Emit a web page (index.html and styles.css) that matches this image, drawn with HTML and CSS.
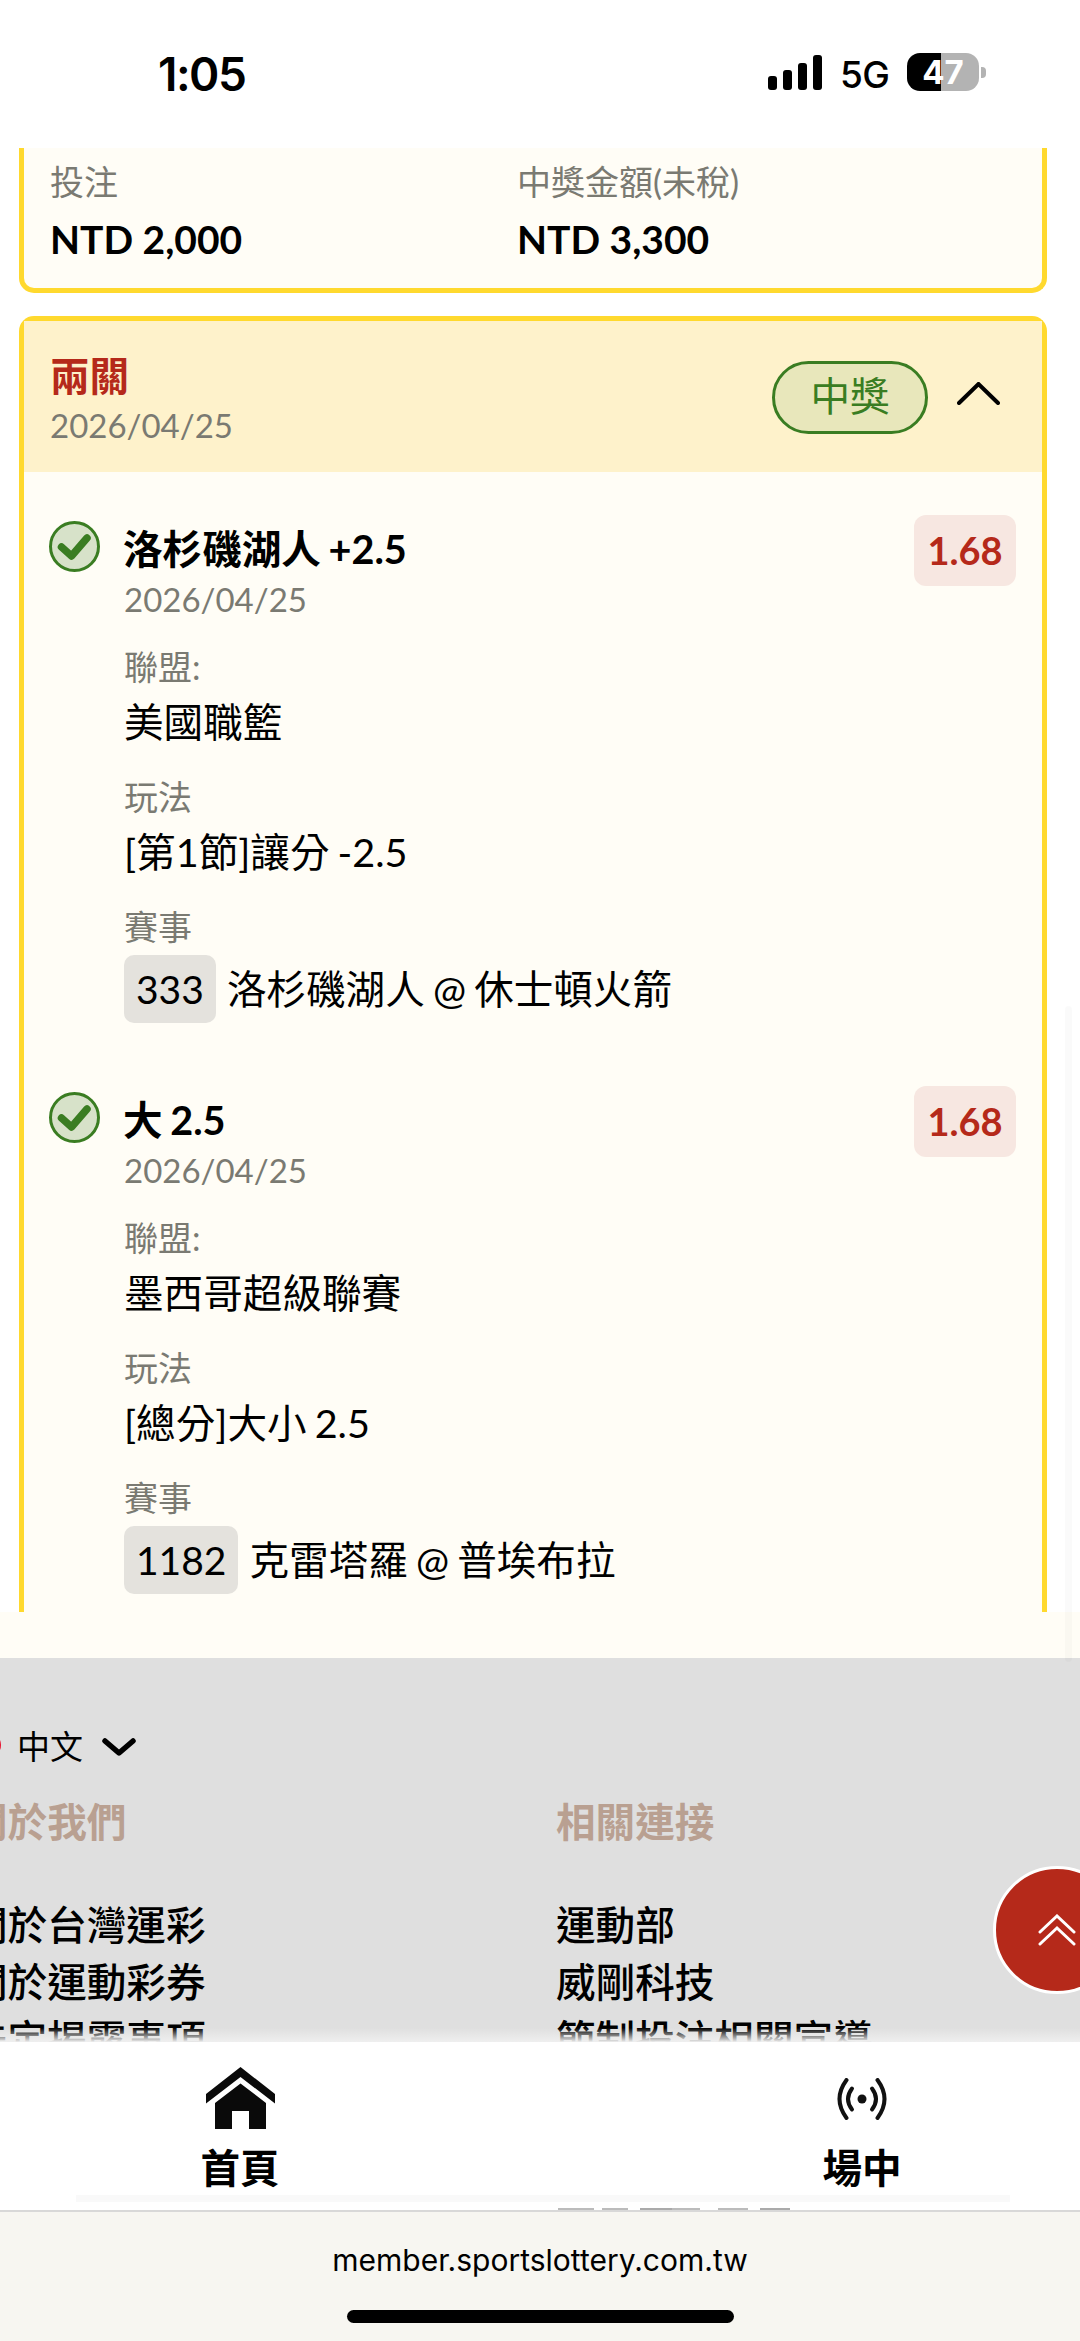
FILE: index.html
```html
<!DOCTYPE html>
<html lang="zh-Hant">
<head>
<meta charset="utf-8">
<title>兩關</title>
<link rel="stylesheet" href="styles.css">
</head>
<body>
<div class="phone">
  <header class="status">
    <span class="clock">1:05</span>
    <div class="status-right">
      <div class="signal"><i class="b1"></i><i class="b2"></i><i class="b3"></i><i class="b4"></i></div>
      <span class="net">5G</span>
      <div class="battery"><div class="cell"><span>47</span></div><i class="nub"></i></div>
    </div>
  </header>

  <main class="scroll">
    <section class="card card-end">
      <div class="summary">
        <div>
          <div class="label">投注</div>
          <div class="amount">NTD 2,000</div>
        </div>
        <div>
          <div class="label">中獎金額(未稅)</div>
          <div class="amount">NTD 3,300</div>
        </div>
      </div>
    </section>

    <section class="card card-start">
      <div class="card-head">
        <div>
          <div class="bet-type">兩關</div>
          <div class="date">2026/04/25</div>
        </div>
        <div class="head-right">
          <span class="badge">中獎</span>
          <svg class="chev-up" viewBox="0 0 43 23" width="43" height="23"><path d="M2 21 21.5 2 41 21" fill="none" stroke="#000" stroke-width="4" stroke-linecap="round" stroke-linejoin="miter"/></svg>
        </div>
      </div>
      <div class="card-body">
        <article class="item">
          <svg class="check" viewBox="0 0 51 51" width="51" height="51"><circle cx="25.5" cy="25.5" r="24" fill="#d7e2c9" stroke="#3a7d22" stroke-width="3"/><path d="M12.500 26 22.500 35 38 17" fill="none" stroke="#3a7d22" stroke-width="7.500" stroke-linecap="round" stroke-linejoin="round"/></svg>
          <div class="item-main">
            <div class="item-title">洛杉磯湖人 +2.5</div>
            <div class="date">2026/04/25</div>
            <div class="label field">聯盟:</div>
            <div class="value">美國職籃</div>
            <div class="label field">玩法</div>
            <div class="value">[第1節]讓分 -2.5</div>
            <div class="label field">賽事</div>
            <div class="match"><span class="chip">333</span><span class="value">洛杉磯湖人 @ 休士頓火箭</span></div>
          </div>
          <span class="odds">1.68</span>
        </article>
        <article class="item">
          <svg class="check" viewBox="0 0 51 51" width="51" height="51"><circle cx="25.5" cy="25.5" r="24" fill="#d7e2c9" stroke="#3a7d22" stroke-width="3"/><path d="M12.500 26 22.500 35 38 17" fill="none" stroke="#3a7d22" stroke-width="7.500" stroke-linecap="round" stroke-linejoin="round"/></svg>
          <div class="item-main">
            <div class="item-title">大 2.5</div>
            <div class="date">2026/04/25</div>
            <div class="label field">聯盟:</div>
            <div class="value">墨西哥超級聯賽</div>
            <div class="label field">玩法</div>
            <div class="value">[總分]大小 2.5</div>
            <div class="label field">賽事</div>
            <div class="match"><span class="chip">1182</span><span class="value">克雷塔羅 @ 普埃布拉</span></div>
          </div>
          <span class="odds">1.68</span>
        </article>
      </div>
    </section>
  </main>

  <div class="cream-gap"></div>

  <footer class="footer">
    <div class="lang">
      <i class="flag"></i><span>中文</span>
      <svg viewBox="0 0 34 18" width="34" height="18"><path d="M3 3 17 15 31 3" fill="none" stroke="#000" stroke-width="5.5" stroke-linecap="round" stroke-linejoin="round"/></svg>
    </div>
    <div class="foot-cols">
      <div class="foot-col">
        <h3>關於我們</h3>
        <a>關於台灣運彩</a>
        <a>關於運動彩券</a>
        <a>法定揭露事項</a>
      </div>
      <div class="foot-col">
        <h3>相關連接</h3>
        <a>運動部</a>
        <a>威剛科技</a>
        <a>節制投注相關宣導</a>
      </div>
    </div>
  </footer>

  <nav class="tabs">
    <div class="tab-row">
      <div class="tab tab-home">
        <svg viewBox="0 0 69 62" width="69" height="62"><path d="M34.500 0 69 27V36.500L34.500 10 0 36.500V27Z" fill="#0a0a0a"/><path d="M34.500 16.500 60 36V62H43V44H26V62H9V36Z" fill="#0a0a0a"/></svg>
        <span>首頁</span>
      </div>
      <div class="tab tab-live">
        <svg viewBox="0 0 52 42" width="52" height="42" class="live"><circle cx="26" cy="21" r="4.500" fill="#111"/><g fill="none" stroke="#111" stroke-width="4" stroke-linecap="round"><path d="M16 10.500Q8 21 16 31.500"/><path d="M36 10.500Q44 21 36 31.500"/><path d="M10.500 2Q-3.500 21 10.500 40"/><path d="M41.500 2Q55.500 21 41.500 40"/></g></svg>
        <span>場中</span>
      </div>
    </div>
    <div class="tab-band"></div>
    <div class="tab-under"></div>
  </nav>

  <div class="browser">
    <div class="url">member.sportslottery.com.tw</div>
    <div class="home-bar"></div>
  </div>

  <div class="scroll-thumb"></div>

  <button class="to-top" type="button" aria-label="top">
    <svg viewBox="0 0 38 32" width="38" height="32"><g fill="none" stroke="#fff" stroke-width="3" stroke-linecap="round"><path d="M2 18 19 2 36 18"/><path d="M2 30 19 14 36 30"/></g></svg>
  </button>
</div>
</body>
</html>
```
FILE: styles.css
```css
* { box-sizing: border-box; }
html, body { margin: 0; padding: 0; background: #fff; }
body { font-family: Lato, "Noto Sans CJK TC", sans-serif; color: #000; }
.phone { position: relative; width: 1080px; height: 2341px; overflow: hidden; display: flex; flex-direction: column; }

/* status bar */
.status { height: 148px; flex: none; background: #fff; display: flex; justify-content: space-between; align-items: flex-start; padding: 46px 94px 0 158px; }
.clock { font-family: Inter, sans-serif; font-weight: 600; font-size: 46px; line-height: 56px; letter-spacing: -1.500px; }
.status-right { display: flex; align-items: flex-start; padding-top: 7px; }
.signal { display: flex; align-items: flex-end; gap: 5.500px; height: 35px; margin-top: 2px; }
.signal i { width: 9.500px; background: #000; border-radius: 3px; }
.b1 { height: 14px; } .b2 { height: 20px; } .b3 { height: 27px; } .b4 { height: 35px; }
.net { font-family: Inter, sans-serif; font-weight: 500; font-size: 37px; line-height: 42px; margin-left: 18px; letter-spacing: -.5px; width: 49px; margin-top: 1px; }
.battery { display: flex; align-items: center; margin-left: 18px; }
.cell { width: 72px; height: 38px; border-radius: 13px; background: linear-gradient(90deg, #000 0 34px, #b3b3b3 34px); color: #fff; font-family: Inter, sans-serif; font-weight: 700; font-size: 33px; line-height: 38px; text-align: center; }
.nub { width: 5px; height: 11px; margin-left: 2px; background: #b3b3b3; border-radius: 0 4px 4px 0; }

/* cards */
.scroll { height: 1464px; flex: none; overflow: hidden; background: #fff; padding: 0 33px 0 19px; }
.card { background: #fffdf6; border: 5px solid #ffd92e; }
.card-end { border-top: 0; border-radius: 0 0 15px 15px; height: 145px; margin-bottom: 23px; }
.card-start { border-bottom: 0; border-radius: 15px 15px 0 0; height: 1296px; }
.summary { display: grid; grid-template-columns: 467px 1fr; padding: 10px 26px 0; }
.label { font-size: 34px; line-height: 48px; color: #7a7a72; }
.amount { font-size: 39px; font-weight: 700; line-height: 54px; margin-top: 6px; }

.card-head { height: 151px; background: #fef2cb; display: flex; justify-content: space-between; padding: 29px 42px 0 26px; }
.bet-type { font-size: 39.600px; font-weight: 700; color: #b5291a; line-height: 52px; }
.date { font-size: 33px; line-height: 47px; color: #7a7a72; }
.head-right { display: flex; align-items: flex-start; gap: 29px; padding-top: 11px; }
.badge { width: 156px; height: 73px; border: 3px solid #3a7d22; border-radius: 37px; background: #e8e7bb; color: #3a7d22; font-size: 39.600px; line-height: 64px; text-align: center; }
.chev-up { margin-top: 21px; }

.card-body { padding: 50px 26px 0 25px; }
.item { display: flex; align-items: flex-start; margin-bottom: 70px; }
.check { flex: none; margin: -1px 24px 0 0; }
.item-main { flex: 1; word-spacing: -2px; }
.item-title { font-size: 39.600px; font-weight: 700; line-height: 54px; margin-left: -1px; }
.field { margin-top: 20px; }
.value { font-size: 39.600px; line-height: 62px; }
.match { display: flex; align-items: center; gap: 11px; margin-top: 4px; }
.chip { background: #e4e2dd; border-radius: 10px; height: 68px; padding: 0 12px; font-size: 39px; line-height: 68px; }
.odds { flex: none; width: 102px; height: 71px; margin-top: -7px; background: #f7e7e1; border-radius: 12px; color: #b5291a; font-size: 38px; font-weight: 700; line-height: 71px; text-align: center; }

.cream-gap { height: 46px; flex: none; background: #fffdf6; }

/* footer */
.footer { position: relative; height: 384px; flex: none; overflow: hidden; background: #dfdfdf; font-family: "Noto Sans CJK TC", sans-serif; padding-top: 64px; }
.footer::after { content: ""; position: absolute; left: 0; right: 0; bottom: 0; height: 14px; background: linear-gradient(#dfdfdf00, #efefef); }
.lang { display: flex; align-items: center; height: 46px; font-size: 33px; margin-left: -23px; }
.flag { width: 24px; height: 24px; border-radius: 50%; background: #e8112d; margin-right: 16px; }
.lang svg { margin: 4px 0 0 19px; }
.foot-cols { display: grid; grid-template-columns: 588px 1fr; margin: 0 0 0 -32px; padding-top: 24px; }
.foot-col h3 { margin: 0 0 46px; font-size: 39.600px; font-weight: 700; line-height: 56px; color: #b9a091; }
.foot-col a { display: block; font-size: 39.600px; font-weight: 500; line-height: 57px; }

/* tabs */
.tabs { height: 168px; flex: none; background: #fff; display: flex; flex-direction: column; }
.tab-row { display: flex; justify-content: space-between; }
.tab { display: flex; flex-direction: column; align-items: center; height: 153px; padding-top: 25px; }
.tab-home { width: 480px; }
.tab-live { width: 436px; }
.tab svg { flex: none; }
.tab .live { margin: 11px 0 9px; }
.tab span { font-family: "Noto Sans CJK TC", sans-serif; font-size: 39.600px; font-weight: 700; line-height: 56px; margin-top: 9px; }
.tab-band { height: 7px; margin: 0 70px 0 76px; background: #f9f9f9; }
.tab-under { height: 2px; margin: 6px 290px 0 558px; background: linear-gradient(90deg, #bbb 0 36px, #0000 36px 44px, #bbb 44px 70px, #0000 70px 82px, #aaa 82px 114px, #bbb 114px 142px, #0000 142px 160px, #bbb 160px 190px, #0000 190px 202px, #aaa 202px); }

/* browser */
.browser { height: 131px; flex: none; background: #f7f6f1; border-top: 2px solid #d8d8d8; display: flex; flex-direction: column; align-items: center; }
.url { font-family: Inter, sans-serif; font-size: 30px; line-height: 40px; margin-top: 28px; color: #000; white-space: nowrap; }
.home-bar { width: 387px; height: 13px; border-radius: 7px; background: #000; margin-top: 30px; }

.scroll-thumb { position: absolute; left: 1065px; top: 1006px; width: 7px; height: 656px; border-radius: 4px; background: #00000005; }
.to-top { position: absolute; left: 993px; top: 1866px; width: 128px; height: 128px; border-radius: 50%; background: #b5291a; border: 3px solid #fff; padding: 0; display: flex; align-items: center; justify-content: center; }
```
